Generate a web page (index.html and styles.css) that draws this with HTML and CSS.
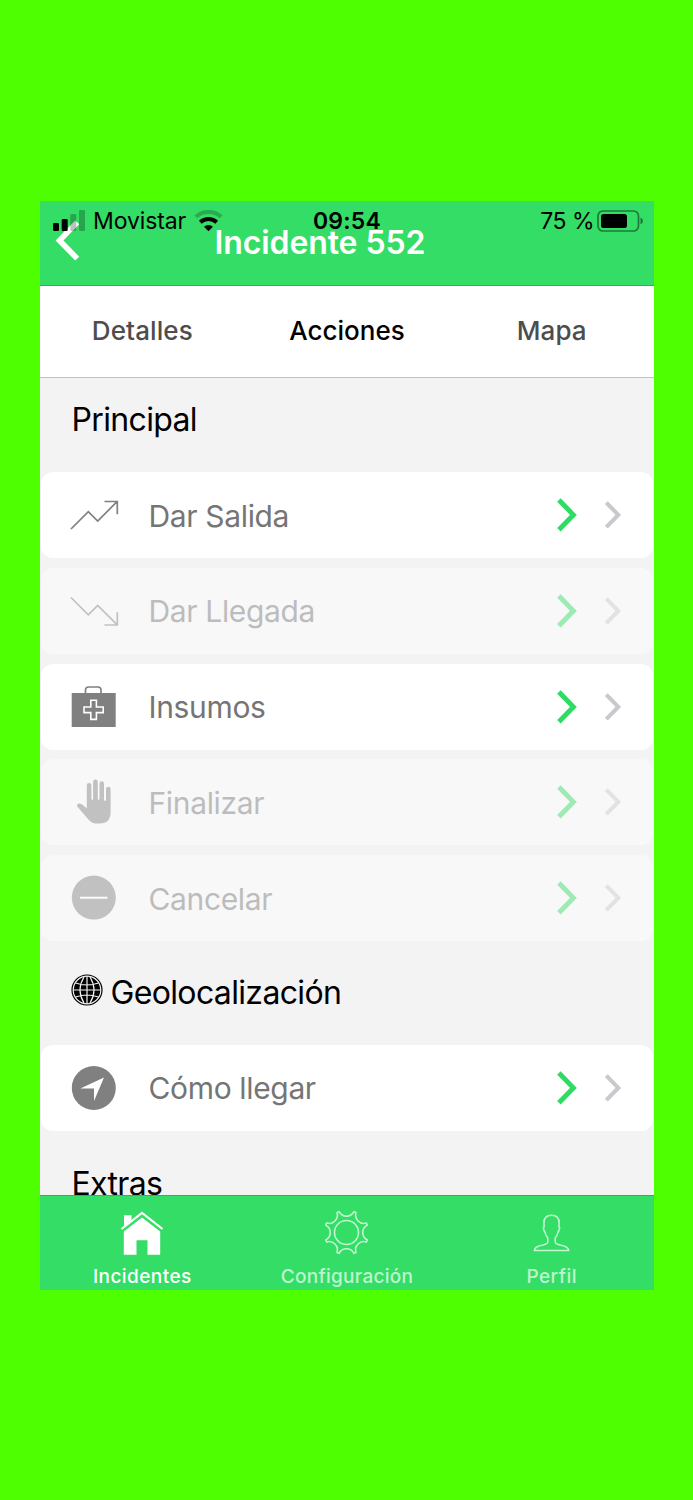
FILE: index.html
```
<!DOCTYPE html>
<html lang="es">
  <head>
    <meta charset="utf-8">
    <title>Incidente 552</title>
    <link rel="stylesheet" href="styles.css">
  </head>
  <body>
    <svg width="0" height="0" class="defs">
      <symbol id="arrow" viewBox="0 0 20 34">
        <path d="M1.9 2 L16.4 16.9 L1.9 31.8" fill="none" stroke="currentColor" stroke-width="4.9"/>
      </symbol>
    </svg>
    <div class="phone">
      <div class="header">
        <div class="status">
          <svg class="signal" width="33" height="22" viewBox="0 0 33 22">
            <rect x="0" y="13" width="6" height="8" rx="1.3"/>
            <rect x="8.7" y="9" width="6" height="12" rx="1.3"/>
            <rect x="17.3" y="4" width="6" height="17" rx="1.3" opacity=".25"/>
            <rect x="26" y="0" width="6" height="21" rx="1.3" opacity=".25"/>
          </svg>
          <span class="carrier">Movistar</span>
          <svg class="wifi" width="30" height="22" viewBox="0 0 30 22">
            <path d="M1.8 6.8 A19 19 0 0 1 27.2 6.8" fill="none" stroke="#000" stroke-width="4" opacity=".22"/>
            <path d="M6.3 12.2 A12.2 12.2 0 0 1 22.7 12.2" fill="none" stroke="#000" stroke-width="4"/>
            <path d="M10 16.8 A6.6 6.6 0 0 1 19 16.8 L14.5 21.2 Z"/>
          </svg>
          <span class="time">09:54</span>
          <span class="percent">75 %</span>
          <svg class="battery" width="47" height="22" viewBox="0 0 47 22">
            <rect x="1" y="1" width="40.5" height="20" rx="5" fill="none" stroke="#000" stroke-width="1.7" opacity=".45"/>
            <rect x="4" y="4" width="26" height="14" rx="2.5"/>
            <path d="M43.5 7.5 Q46 8.5 46 11 Q46 13.5 43.5 14.5 Z" opacity=".45"/>
          </svg>
        </div>
        <svg class="back" width="26" height="42" viewBox="0 0 26 42">
          <path d="M22.2 2.4 L4.5 20.5 L22.2 38.6" fill="none" stroke="#fff" stroke-width="5.6"/>
        </svg>
        <div class="title">Incidente 552</div>
      </div>

      <div class="segment">
        <a class="segment-button">Detalles</a>
        <a class="segment-button active">Acciones</a>
        <a class="segment-button">Mapa</a>
      </div>

      <div class="content">
        <div class="list-header">Principal</div>
        <div class="item">
          <svg class="icon" width="50" height="50" viewBox="0 0 50 50">
            <path d="M1 39 L18.3 21.7 L27.7 31 L47 11.7 M34.5 11.5 H47.3 V24.3" fill="none" stroke="#808080" stroke-width="1.7"/>
          </svg>
          <span class="label">Dar Salida</span>
          <svg class="go"><use href="#arrow"/></svg>
          <svg class="detail"><use href="#arrow"/></svg>
        </div>
        <div class="item disabled">
          <svg class="icon" width="50" height="50" viewBox="0 0 50 50">
            <path d="M1 11.5 L18.3 28.8 L27.7 19.5 L47 38.7 M34.5 39 H47.3 V26.2" fill="none" stroke="#808080" stroke-width="1.7"/>
          </svg>
          <span class="label">Dar Llegada</span>
          <svg class="go"><use href="#arrow"/></svg>
          <svg class="detail"><use href="#arrow"/></svg>
        </div>
        <div class="item">
          <svg class="icon" width="50" height="50" viewBox="0 0 50 50">
            <path d="M15.5 11 V8 Q15.5 5 18.5 5 H28 Q31 5 31 8 V11" fill="none" stroke="#808080" stroke-width="1.7"/>
            <path d="M1.7 11 H45.7 V45 H1.7 Z" fill="#808080"/>
            <path d="M20.8 18.2 H26.4 V25 H33.2 V30.6 H26.4 V37.4 H20.8 V30.6 H14 V25 H20.8 Z" fill="none" stroke="#fff" stroke-width="1.6"/>
          </svg>
          <span class="label">Insumos</span>
          <svg class="go"><use href="#arrow"/></svg>
          <svg class="detail"><use href="#arrow"/></svg>
        </div>
        <div class="item disabled">
          <svg class="icon" width="50" height="50" viewBox="0 0 50 50">
            <path d="M16.8 31.5 V8.2 A2.3 2.3 0 0 1 21.4 8.2 V22 Q22.2 24 23.1 22 V4.8 A2.3 2.3 0 0 1 27.8 4.8 V22 Q28.6 24 29.5 22 V6.5 A2.2 2.2 0 0 1 34 6.5 V23 Q35 25 36 23 V12 A2.2 2.2 0 0 1 40.6 12 V35 Q40.6 46.5 29.5 46.5 H26 Q21.5 46.5 17.5 41.5 L7.5 29.8 Q6.3 27.8 8.2 26.8 Q10 26 12.5 27.8 Z" fill="#808080"/>
          </svg>
          <span class="label">Finalizar</span>
          <svg class="go"><use href="#arrow"/></svg>
          <svg class="detail"><use href="#arrow"/></svg>
        </div>
        <div class="item disabled">
          <svg class="icon" width="50" height="50" viewBox="0 0 50 50">
            <circle cx="23.8" cy="24.6" r="22" fill="#808080"/>
            <path d="M10 24.7 H37.5" stroke="#fff" stroke-width="2"/>
          </svg>
          <span class="label">Cancelar</span>
          <svg class="go"><use href="#arrow"/></svg>
          <svg class="detail"><use href="#arrow"/></svg>
        </div>

        <div class="list-header geo">
          <svg class="globe" width="32" height="32" viewBox="0 0 32 32">
            <circle cx="16" cy="16" r="15" fill="none" stroke="#000" stroke-width="1.2"/>
            <circle cx="16" cy="16" r="13.2"/>
            <path d="M16 2 V30 M2 16 H30 M4.5 9 Q16 13 27.5 9 M4.5 23 Q16 19 27.5 23 M13 3 Q5 16 13 29 M19 3 Q27 16 19 29" fill="none" stroke="#f3f3f3" stroke-width="1.2"/>
          </svg>
          <span>Geolocalización</span>
        </div>
        <div class="item">
          <svg class="icon" width="50" height="50" viewBox="0 0 50 50">
            <circle cx="23.8" cy="25" r="22" fill="#808080"/>
            <path d="M34 14.6 L24 38 V25.6 H10.4 Z" fill="#fff"/>
          </svg>
          <span class="label">Cómo llegar</span>
          <svg class="go"><use href="#arrow"/></svg>
          <svg class="detail"><use href="#arrow"/></svg>
        </div>
        <div class="list-header extras">Extras</div>
      </div>

      <div class="tabbar">
        <a class="tab selected">
          <svg width="48" height="48" viewBox="-24 -24 48 48">
            <path d="M-18 -17.7 H-10.5 V-13 L-18 -6.5 Z M0 -15.5 L18.2 -1.5 V21.7 H5.5 V7.2 H-5.5 V21.7 H-18.2 V-1.5 Z" fill="currentColor"/>
            <path d="M-20.5 -4 L0 -20 L20.5 -4" fill="none" stroke="currentColor" stroke-width="2.2"/>
          </svg>
          <span>Incidentes</span>
        </a>
        <a class="tab">
          <svg width="48" height="48" viewBox="-23.5 -23.5 48 48">
            <g fill="none" stroke="currentColor" stroke-width="1.6" stroke-linejoin="round">
              <circle r="12"/>
              <path d="M20.8 -7.4 A8.3 8.3 0 0 0 20.8 7.4 L19.9 9.5 A8.3 8.3 0 0 0 9.5 19.9 L7.4 20.8 A8.3 8.3 0 0 0 -7.4 20.8 L-9.5 19.9 A8.3 8.3 0 0 0 -19.9 9.5 L-20.8 7.4 A8.3 8.3 0 0 0 -20.8 -7.4 L-19.9 -9.5 A8.3 8.3 0 0 0 -9.5 -19.9 L-7.4 -20.8 A8.3 8.3 0 0 0 7.4 -20.8 L9.5 -19.9 A8.3 8.3 0 0 0 19.9 -9.5 Z"/>
            </g>
          </svg>
          <span class="config">Configuración</span>
        </a>
        <a class="tab">
          <svg width="48" height="48" viewBox="-23.5 -23.5 48 48">
            <path d="M0 -17.2 C5 -17.2 8 -14.5 7.6 -9 L7.3 -6 Q8.7 -5.5 7.6 -2.5 Q7.2 -1 6.5 -.5 Q6 3 3.7 5.5 V9.5 Q4 11.5 8.5 12.5 Q17 14 17.2 18 H-17.2 Q-17 14 -8.5 12.5 Q-4 11.5 -3.7 9.5 V5.5 Q-6 3 -6.5 -.5 Q-7.2 -1 -7.6 -2.5 Q-8.7 -5.5 -7.3 -6 L-7.6 -9 C-8 -14.5 -5 -17.2 0 -17.2 Z" fill="none" stroke="currentColor" stroke-width="1.6"/>
          </svg>
          <span>Perfil</span>
        </a>
      </div>
    </div>
  </body>
</html>
```
FILE: styles.css
```
body {
  margin: 0;
  background: #4dff00;
  font-family: Inter, "Liberation Sans", sans-serif;
}
.defs {
  display: block;
}
.phone {
  display: flex;
  flex-direction: column;
  width: 614px;
  height: 1089px;
  margin: 201px 0 0 40px;
  background: #f3f3f3;
}
.header {
  position: relative;
  box-sizing: border-box;
  height: 85px;
  background: #34dd66;
  border-bottom: 1px solid #2bb45a;
}
.status {
  display: flex;
  align-items: center;
  height: 38px;
  padding: 1px 10px 0 13px;
  font-size: 23px;
  position: relative;
  z-index: 1;
}
.carrier {
  width: 93px;
  margin-left: 7px;
  letter-spacing: -0.1px;
}
.wifi {
  margin-left: 8px;
}
.time {
  width: 70px;
  margin-left: 89px;
  font-weight: 600;
  letter-spacing: 0.2px;
}
.percent {
  margin-left: auto;
  margin-right: 3px;
  letter-spacing: -0.5px;
}
/* the title row slides under the status bar */
.back {
  position: absolute;
  left: 15px;
  top: 19px;
}
.title {
  position: absolute;
  top: 22px;
  width: 100%;
  text-indent: 174.5px;
  color: #fff;
  font-size: 32px;
  font-weight: 600;
  letter-spacing: -0.1px;
  line-height: 40px;
}
.segment {
  display: flex;
  box-sizing: border-box;
  height: 92px;
  background: #fff;
  border-bottom: 1px solid #c2c2c2;
}
.segment-button {
  flex: 1;
  text-align: center;
  line-height: 90px;
  font-size: 26px;
  font-weight: 500;
  letter-spacing: 0.1px;
  color: #4d4d4d;
}
.segment-button.active {
  color: #000;
  letter-spacing: 0;
}
.content {
  flex: 1;
  overflow: hidden;
  padding: 0 1px;
}
.list-header {
  height: 94px;
  padding-left: 30.5px;
  line-height: 84px;
  font-size: 32px;
  letter-spacing: -0.65px;
  color: #000;
}
.geo {
  display: flex;
  align-items: center;
  height: 104px;
  margin-top: -10px;
  line-height: 104px;
}
.geo span {
  padding-top: 1px;
}
.globe {
  margin: -6px 8px 0 -1px;
}
.item {
  display: flex;
  align-items: center;
  height: 86px;
  margin-bottom: 9.8px;
  padding: 0 31px 0 29px;
  background: #fff;
  border-radius: 12px;
}
.item.disabled {
  background: #f8f8f8;
}
.item.disabled svg,
.item.disabled .label {
  opacity: 0.45;
}
.label {
  flex: 1;
  margin-left: 28.5px;
  padding-top: 1px;
  font-size: 30px;
  letter-spacing: -0.35px;
  color: #757575;
}
.go {
  width: 20px;
  height: 34px;
  margin-right: 27px;
  color: #2fdb62;
}
.detail {
  width: 18px;
  height: 28px;
  color: #c8c8cd;
}
.extras {
  height: 64px;
  line-height: 85px;
}
.tabbar {
  display: flex;
  box-sizing: border-box;
  height: 95px;
  background: #34dd66;
  border-top: 1px solid #2bb45a;
}
.tab {
  flex: 1;
  display: flex;
  flex-direction: column;
  align-items: center;
  padding-top: 13px;
  color: rgba(255, 255, 255, 0.7);
  font-size: 19px;
  font-weight: 500;
  letter-spacing: 0.45px;
  line-height: 23px;
}
.tab span {
  margin-top: 8px;
}
.tab .config {
  letter-spacing: 0.3px;
}
.tab.selected {
  color: #fff;
}
```
